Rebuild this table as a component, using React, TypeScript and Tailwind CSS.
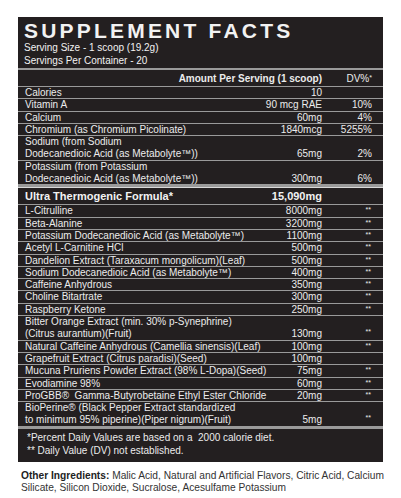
import React from "react";

type Row = { name: string[]; amt: string; dv?: string; star?: boolean };

const top: Row[] = [
  { name: ["Calories"], amt: "10" },
  { name: ["Vitamin A"], amt: "90 mcg RAE", dv: "10%" },
  { name: ["Calcium"], amt: "60mg", dv: "4%" },
  { name: ["Chromium (as Chromium Picolinate)"], amt: "1840mcg", dv: "5255%" },
  { name: ["Sodium (from Sodium", "Dodecanedioic Acid (as Metabolyte\u2122))"], amt: "65mg", dv: "2%" },
  { name: ["Potassium (from Potassium", "Dodecanedioic Acid (as Metabolyte\u2122))"], amt: "300mg", dv: "6%" },
];

const blend: Row[] = [
  { name: ["L-Citrulline"], amt: "8000mg", star: true },
  { name: ["Beta-Alanine"], amt: "3200mg", star: true },
  { name: ["Potassium Dodecanedioic Acid (as Metabolyte\u2122)"], amt: "1100mg", star: true },
  { name: ["Acetyl L-Carnitine HCl"], amt: "500mg", star: true },
  { name: ["Dandelion Extract (Taraxacum mongolicum)(Leaf)"], amt: "500mg", star: true },
  { name: ["Sodium Dodecanedioic Acid (as Metabolyte\u2122)"], amt: "400mg", star: true },
  { name: ["Caffeine Anhydrous"], amt: "350mg", star: true },
  { name: ["Choline Bitartrate"], amt: "300mg", star: true },
  { name: ["Raspberry Ketone"], amt: "250mg", star: true },
  { name: ["Bitter Orange Extract (min. 30% p-Synephrine)", "(Citrus aurantium)(Fruit)"], amt: "130mg", star: true },
  { name: ["Natural Caffeine Anhydrous (Camellia sinensis)(Leaf)"], amt: "100mg", star: true },
  { name: ["Grapefruit Extract (Citrus paradisi)(Seed)"], amt: "100mg" },
  { name: ["Mucuna Pruriens Powder Extract (98% L-Dopa)(Seed)"], amt: "75mg", star: true },
  { name: ["Evodiamine 98%"], amt: "60mg", star: true },
  { name: ["ProGBB\u00ae  Gamma-Butyrobetaine Ethyl Ester Chloride"], amt: "20mg", star: true },
  { name: ["BioPerine\u00ae (Black Pepper Extract standardized", "to minimum 95% piperine)(Piper nigrum)(Fruit)"], amt: "5mg", star: true },
];

function RowView({ r }: { r: Row }) {
  const two = r.name.length > 1;
  return (
    <div
      className={
        "flex bg-[#231f20] pl-[7px] pr-[11px] text-[10px] text-[#ececec] " +
        (two ? "h-[23.6px] items-end leading-[11.8px]" : "h-[11.3px] items-center leading-[11.3px]")
      }
    >
      <div className="flex-1 whitespace-pre">
        {r.name.map((n, i) => (
          <div key={i}>{n}</div>
        ))}
      </div>
      <div className="text-right whitespace-pre">{r.amt}</div>
      <div className="relative w-[50px] self-stretch text-right">
        {r.dv && (
          <div className={two ? "absolute right-0 bottom-0" : "absolute right-0 top-0"}>{r.dv}</div>
        )}
        {r.star && (
          <div
            className={
              "absolute right-[1px] text-[7px] leading-[7px] " + (two ? "bottom-[5px]" : "top-[1px]")
            }
          >
            **
          </div>
        )}
      </div>
    </div>
  );
}

export default function App() {
  return (
    <div
      className="min-h-[498px] w-[401px] bg-white"
      style={{ fontFamily: '"Liberation Sans", Arial, sans-serif' }}
    >
      <div className="pt-[17px] pl-[18px]">
        <div className="flex w-[365px] flex-col bg-[#9a9a9a]">
          {/* header */}
          <div className="bg-[#231f20] px-[6px] pt-[3px] pb-[1px] text-[#f2f2f2]">
            <div className="text-[21px] font-bold leading-[21px] tracking-[3.2px]">SUPPLEMENT FACTS</div>
            <div className="text-[10px] leading-[13px]">Serving Size - 1 scoop (19.2g)</div>
            <div className="text-[10px] leading-[13px]">Servings Per Container - 20</div>
          </div>
          <div className="mt-[2px] flex h-[16px] items-center bg-[#231f20] pl-[7px] pr-[11px] text-[10px] text-[#ececec]">
            <div className="flex-1" />
            <div className="font-bold">Amount Per Serving (1 scoop)</div>
            <div className="w-[50px] text-right">
              DV%<span className="relative top-[-2px] text-[7px]">*</span>
            </div>
          </div>
          <div className="mt-[1px] flex flex-col gap-[1px]">
            {top.map((r, i) => (
              <RowView key={i} r={r} />
            ))}
          </div>
          <div className="mt-[3px] border-t border-[#d8d8d8] bg-[#231f20]" />
          <div className="flex h-[16px] items-center bg-[#231f20] pl-[7px] pr-[11px] text-[11px] font-bold text-[#f2f2f2]">
            <div className="flex-1">Ultra Thermogenic Formula*</div>
            <div className="text-right">15,090mg</div>
            <div className="w-[50px]" />
          </div>
          <div className="mt-[1px] flex flex-col gap-[1px]">
            {blend.map((r, i) => (
              <RowView key={i} r={r} />
            ))}
          </div>
          <div className="mt-[3px] bg-[#231f20] pt-[2px] pb-[5px] pl-[9px] text-[10px] leading-[13px] text-[#ececec]">
            <div>*Percent Daily Values are based on a&nbsp; 2000 calorie diet.</div>
            <div>** Daily Value (DV) not established.</div>
          </div>
        </div>
      </div>
      <div className="mt-[8px] pl-[21px] pr-[6px] text-[10.2px] leading-[12.5px] text-[#333]">
        <span className="font-bold text-[#222]">Other Ingredients:</span> Malic Acid, Natural and Artificial Flavors, Citric Acid, Calcium
        <br />
        Silicate, Silicon Dioxide, Sucralose, Acesulfame Potassium
      </div>
    </div>
  );
}
